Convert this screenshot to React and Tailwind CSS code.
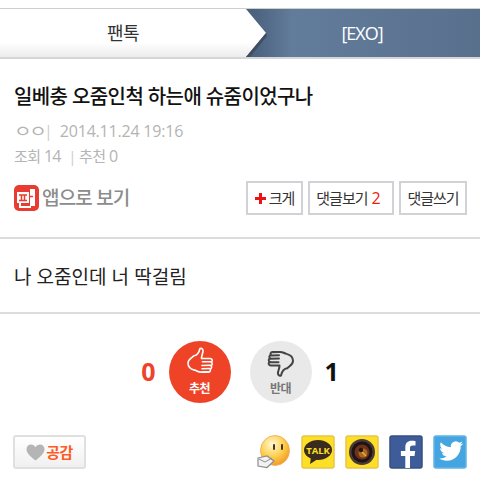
import React from 'react';

const font = { fontFamily: '"Open Sans", "Noto Sans CJK KR", sans-serif' };

const ThumbPath = ({ stroke, width = 1.6 }) => (
  <g fill="none" stroke={stroke} strokeWidth={width} strokeLinecap="round" strokeLinejoin="round">
    <path d="M14 1.500c2-.6 3.400.8 3 3-.5 2.600-1.500 4.400-1.500 7h8.500c2.400 0 3.200 2.800 1 3.600 1.700.6 1.700 3.100-.2 3.600 1.300.9 1 2.900-.7 3.300.8 1.100.2 3-1.500 3.100h-7.600c-3 0-4.200-1.400-6.500-2-3-.7-6.500-2.800-6.500-7.100 0-3.600 3.100-4.700 5.800-7.200C10.400 8.600 13 5.800 14 1.500z" />
    <path d="M16.500 14.800h8M16 18.500l8.500-.3M16 21.800l7.500-.3M16.500 25l5.500-.2" />
  </g>
);

const Kakao = () => (
  <svg width="34" height="34" viewBox="0 0 34 34">
    <rect x="1" y="1" width="32" height="32" rx="2" fill="#fde025" stroke="#e8c54a" strokeWidth="1.500" />
    <ellipse cx="17" cy="15" rx="14" ry="10" fill="#3b2a1e" />
    <path d="M10 22l-1 7 7-4.500z" fill="#3b2a1e" />
    <text x="17" y="18.500" textAnchor="middle" fontSize="9.500" fontWeight="700" fill="#fde025" fontFamily="Open Sans, sans-serif">TALK</text>
  </svg>
);

const Camera = () => (
  <svg width="34" height="34" viewBox="0 0 34 34">
    <rect x="1" y="1" width="32" height="32" rx="2" fill="#fde025" stroke="#e8c54a" strokeWidth="1.500" />
    <circle cx="17" cy="17" r="13" fill="#4a3a38" />
    <circle cx="17" cy="17" r="10.500" fill="#1d1413" />
    <circle cx="17" cy="17" r="7.500" fill="#70301e" />
    <circle cx="18" cy="18" r="4.500" fill="#a86a1c" />
    <path d="M17 17l4 4" stroke="#e8b040" strokeWidth="1.500" />
    <circle cx="16" cy="15" r="2.200" fill="#241610" />
  </svg>
);

const Facebook = () => (
  <svg width="34" height="34" viewBox="0 0 34 34">
    <rect x="1" y="1" width="32" height="32" rx="2" fill="#3f5c9a" stroke="#36507f" strokeWidth="1.500" />
    <path d="M21 33V21h4.500l.7-5H21v-3c0-1.500.6-2.500 2.600-2.500H26.500V6c-.8-.1-2.200-.2-3.800-.2-4 0-6.400 2.400-6.400 6.400V16h-4.400v5h4.400v12z" fill="#fff" />
  </svg>
);

const Twitter = () => (
  <svg width="34" height="34" viewBox="0 0 34 34">
    <rect x="1" y="1" width="32" height="32" rx="2" fill="#45a5e0" stroke="#62b4e6" strokeWidth="1.500" />
    <path d="M30 8.500c-.9.4-1.800.7-2.800.8 1-.6 1.800-1.600 2.100-2.700-.9.6-2 1-3.100 1.200a4.900 4.900 0 0 0-8.300 4.400c-4-.2-7.600-2.100-10-5-.4.7-.7 1.600-.7 2.500 0 1.700.9 3.200 2.200 4-.8 0-1.600-.2-2.200-.6v.1c0 2.400 1.700 4.300 3.900 4.800-.4.1-.8.200-1.300.2-.3 0-.6 0-.9-.1.6 1.900 2.400 3.300 4.600 3.400a9.900 9.900 0 0 1-7.300 2c2.200 1.400 4.800 2.200 7.500 2.200 9 0 14-7.500 14-14v-.6c1-.7 1.800-1.600 2.500-2.600z" fill="#fff" />
  </svg>
);

const Emoticon = () => (
  <svg width="34" height="34" viewBox="0 0 34 34">
    <defs>
      <radialGradient id="face" cx="0.4" cy="0.3" r="0.8">
        <stop offset="0" stopColor="#fff8d8" />
        <stop offset="0.5" stopColor="#fdd050" />
        <stop offset="1" stopColor="#f08c18" />
      </radialGradient>
    </defs>
    <ellipse cx="18" cy="15.500" rx="14.500" ry="15" fill="url(#face)" stroke="#f0a850" strokeWidth="0.800" />
    <rect x="16" y="9" width="2" height="6" rx="1" fill="#4a3420" />
    <rect x="24" y="9" width="2" height="6" rx="1" fill="#4a3420" />
    <path d="M1 23l9-2 7 5-7 6.500-9-1.500z" fill="#f2f2f2" stroke="#8d8d8d" strokeWidth="1.200" />
    <path d="M2 24l6 3 7-4" fill="none" stroke="#8d8d8d" strokeWidth="1" />
  </svg>
);

const AppLogo = () => (
  <div className="w-[25px] h-[26px] rounded-[5px] bg-[#e83c32] flex items-center justify-center">
    <svg width="21" height="21" viewBox="0 0 21 21">
      <path d="M1 4h12v11H1zM14 1h5v17h-5z" fill="#fff" />
      <path d="M3 7h8M3 12.500h8M5.500 7v5.500M8.500 7v5.500M14 8.500h3" stroke="#e83c32" strokeWidth="1.500" fill="none" />
      <path d="M4 15v4h11" stroke="#fff" strokeWidth="2" fill="none" />
    </svg>
  </div>
);

const ActionButton = ({ className, children }) => (
  <button className={`h-[34px] border-2 border-[#d0d2d6] bg-white text-[15px] text-[#333] tracking-[-1px] flex items-center justify-center ${className}`}>
    {children}
  </button>
);

export default function App() {
  return (
    <div className="w-[480px] h-[480px] bg-white overflow-hidden" style={font}>
      <div className="pt-2">
        <nav className="relative flex h-[51px] border-t border-b-2 border-t-[#cfcfcf] border-b-[#d4d6da]">
          <div className="w-[246px] flex items-center justify-center bg-gradient-to-b from-white from-70% to-[#ececec] text-[18px] text-[#333] tracking-[-0.5px]">
            팬톡
          </div>
          <div className="flex-1 flex items-center justify-center bg-gradient-to-r from-[#4b627e] from-[3%] via-[#627c9b] via-[20%] to-[#59708d] text-white text-[18px] tracking-[-1px] pr-[2px]">
            [EXO]
          </div>
          <svg className="absolute left-[246px] top-0" width="21" height="48" viewBox="0 0 21 48">
            <defs>
              <linearGradient id="tab" x1="0" y1="0" x2="0" y2="1">
                <stop offset="0.7" stopColor="#ffffff" />
                <stop offset="1" stopColor="#ececec" />
              </linearGradient>
            </defs>
            <path d="M0 0l20 24L0 48z" fill="url(#tab)" />
            <path d="M0 48l20-24 1 3L4 48z" fill="#3f4f63" />
          </svg>
        </nav>
      </div>

      <div className="px-[14px] pt-[24px]">
        <h1 className="text-[20px] leading-[28px] font-medium text-[#111] tracking-[-0.6px]">
          일베충 오줌인척 하는애 슈줌이었구나
        </h1>
        <div className="mt-[8px] flex items-center text-[16px] leading-[24px] text-[#b4b4b4]">
          <span className="inline-block origin-left scale-x-[1.2] tracking-[-2px] w-[24px] whitespace-nowrap">ㅇㅇ</span>
          <span className="ml-[6px] text-[#ccc]">|</span>
          <span className="ml-[7px] tracking-[-0.2px]">2014.11.24 19:16</span>
        </div>
        <div className="mt-[1px] flex items-center text-[15px] leading-[24px] text-[#b4b4b4] tracking-[-0.5px]">
          <span>조회 <span className="text-[16px] tracking-[-1px]">14</span></span>
          <span className="ml-[8px] text-[#ccc]">|</span>
          <span className="ml-[3px]">추천 <span className="text-[16px]">0</span></span>
        </div>
        <div className="mt-[13px] flex items-center justify-between">
          <div className="flex items-center gap-[3px]">
            <AppLogo />
            <span className="text-[19px] font-medium text-[#8c8c8c] tracking-[-0.8px]">앱으로 보기</span>
          </div>
          <div className="flex items-center gap-[5px] -mr-[1px]">
            <ActionButton className="w-[57px]">
              <svg className="mr-[3px]" width="11" height="11" viewBox="0 0 11 11">
                <path d="M4 0h3v4h4v3H7v4H4V7H0V4h4z" fill="#ee1111" />
              </svg>
              크게
            </ActionButton>
            <ActionButton className="w-[86px]">
              댓글보기<span className="text-[#f02010] text-[16px] ml-[4px] mr-[6px]">2</span>
            </ActionButton>
            <ActionButton className="w-[68px]">댓글쓰기</ActionButton>
          </div>
        </div>
      </div>

      <div className="mt-[22px] border-t-2 border-[#dcdcdc] h-[75px] px-[14px] pt-[3px] flex items-center">
        <p className="text-[19px] text-[#222] tracking-[0.05px]">나 오줌인데 너 딱걸림</p>
      </div>

      <div className="border-t-2 border-[#dcdcdc] pt-[27px] flex items-center justify-center">
        <span className="text-[25px] font-bold text-[#f0422a]">0</span>
        <div className="ml-[13px] w-[62px] h-[62px] rounded-full bg-[#ef4328] flex flex-col items-center justify-end pb-[7px]">
          <svg className="mb-[5px]" width="28" height="30" viewBox="0 0 28 30"><ThumbPath stroke="#fff" /></svg>
          <span className="text-[12px] leading-[14px] font-bold text-white tracking-[-0.5px]">추천</span>
        </div>
        <div className="ml-[19px] w-[62px] h-[62px] rounded-full bg-[#e9e9e9] flex flex-col items-center justify-end pb-[7px]">
          <svg className="mb-[5px] rotate-180" width="28" height="30" viewBox="0 0 28 30"><ThumbPath stroke="#444" width={2} /></svg>
          <span className="text-[12px] leading-[14px] font-bold text-[#777] tracking-[-0.5px]">반대</span>
        </div>
        <span className="ml-[13px] text-[25px] font-bold text-[#111]">1</span>
      </div>

      <div className="mt-[32px] px-[13px] flex items-center justify-between">
        <button className="w-[73px] h-[34px] rounded-[3px] border-2 border-[#e0e0e0] bg-gradient-to-b from-white to-[#f0f0f0] flex items-center justify-center gap-[1px]">
          <svg width="19" height="17" viewBox="0 0 19 17">
            <path d="M9.500 16.500C4 12 .5 9 .5 5.200 .5 2.500 2.600.6 5 .6c1.900 0 3.500 1 4.500 2.700C10.500 1.600 12.100.6 14 .6c2.400 0 4.500 1.900 4.500 4.600 0 3.800-3.500 6.800-9 11.300z" fill="#b5b5b5" />
          </svg>
          <span className="text-[15px] font-bold text-[#ff5a1f] tracking-[-0.5px]">공감</span>
        </button>
        <div className="flex items-center gap-[10px]">
          <Emoticon />
          <Kakao />
          <Camera />
          <Facebook />
          <Twitter />
        </div>
      </div>
    </div>
  );
}
